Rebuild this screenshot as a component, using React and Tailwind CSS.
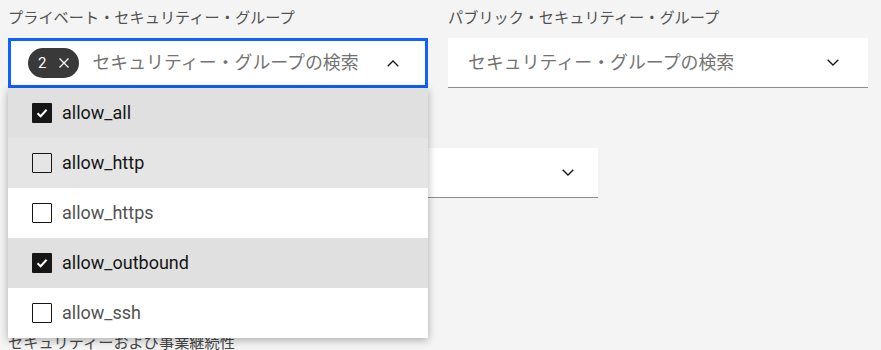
import React from "react";

const FONT = { fontFamily: 'Roboto, "Noto Sans CJK JP", sans-serif' };

function ChevronDown() {
  return (
    <svg width="12" height="7" viewBox="0 0 12 7" fill="none">
      <path d="M0.7 0.7 L6 6 L11.3 0.7" stroke="#161616" strokeWidth="1.3" />
    </svg>
  );
}

function ChevronUp() {
  return (
    <svg width="12" height="7" viewBox="0 0 12 7" fill="none">
      <path d="M0.7 6.3 L6 1 L11.3 6.3" stroke="#161616" strokeWidth="1.3" />
    </svg>
  );
}

function CloseIcon() {
  return (
    <svg width="14" height="14" viewBox="0 0 14 14" fill="none">
      <path d="M2.5 2.5 L11.5 11.5 M11.5 2.5 L2.5 11.5" stroke="#ffffff" strokeWidth="1.3" />
    </svg>
  );
}

function Checkbox({ checked }) {
  if (checked) {
    return (
      <div className="w-5 h-5 rounded-[1px] bg-[#161616] flex items-center justify-center shrink-0">
        <svg width="14" height="12" viewBox="0 0 14 12" fill="none">
          <path d="M2.5 6.2 L5.6 9.2 L11.6 2.8" stroke="#ffffff" strokeWidth="2" />
        </svg>
      </div>
    );
  }
  return <div className="w-5 h-5 rounded-[1px] border border-[#161616] bg-transparent shrink-0" />;
}

const items = [
  { label: "allow_all", checked: true, bg: "bg-[#e0e0e0]", color: "text-[#161616]" },
  { label: "allow_http", checked: false, bg: "bg-[#e5e5e5]", color: "text-[#161616]" },
  { label: "allow_https", checked: false, bg: "bg-white", color: "text-[#525252]" },
  { label: "allow_outbound", checked: true, bg: "bg-[#e0e0e0]", color: "text-[#161616]" },
  { label: "allow_ssh", checked: false, bg: "bg-white", color: "text-[#525252]" },
];

export default function App() {
  return (
    <div className="min-h-screen bg-[#f4f4f4] p-2 overflow-hidden" style={FONT}>
      <div className="flex gap-5">
        <div className="w-[420px] relative z-10">
          <div className="h-5 mb-2.5 text-[15.2px] leading-5 text-[#525252]">
            プライベート・セキュリティー・グループ
          </div>
          <div className="relative">
            <div className="h-[50px] bg-white border-[3px] border-[#0f62fe] flex items-center pl-[17px] pr-[26px]">
              <div className="h-[30px] rounded-full bg-[#393939] flex items-center pl-[10px] pr-[8px] gap-[11px]">
                <span className="text-[15px] leading-5 text-white">2</span>
                <CloseIcon />
              </div>
              <span className="ml-[13px] text-[17.9px] leading-6 text-[#737373] flex-1">
                セキュリティー・グループの検索
              </span>
              <ChevronUp />
            </div>
            <div className="absolute left-0 top-[50px] w-full bg-white shadow-[0_2px_8px_rgba(0,0,0,0.3)]">
              {items.map((it) => (
                <div key={it.label} className={`h-[50px] flex items-center pl-6 gap-[10px] ${it.bg}`}>
                  <Checkbox checked={it.checked} />
                  <span className={`text-[18px] leading-6 ${it.color}`}>{it.label}</span>
                </div>
              ))}
            </div>
          </div>
        </div>
        <div className="w-[420px]">
          <div className="h-5 mb-2.5 text-[15.2px] leading-5 text-[#525252]">
            パブリック・セキュリティー・グループ
          </div>
          <div className="h-[50px] bg-white border-b border-[#8d8d8d] flex items-center pl-5 pr-[29px]">
            <span className="text-[17.9px] leading-6 text-[#737373] flex-1">
              セキュリティー・グループの検索
            </span>
            <ChevronDown />
          </div>
        </div>
      </div>

      <div className="mt-[30px] w-[590px]">
        <div className="h-5 mb-2.5 text-[15px] leading-5 text-[#525252]">ゾーン</div>
        <div className="h-[50px] bg-white border-b border-[#8d8d8d] flex items-center justify-end pr-6">
          <ChevronDown />
        </div>
      </div>

      <div className="mt-[135px] text-[15.2px] leading-5 text-[#474747]">
        セキュリティーおよび事業継続性
      </div>
    </div>
  );
}
